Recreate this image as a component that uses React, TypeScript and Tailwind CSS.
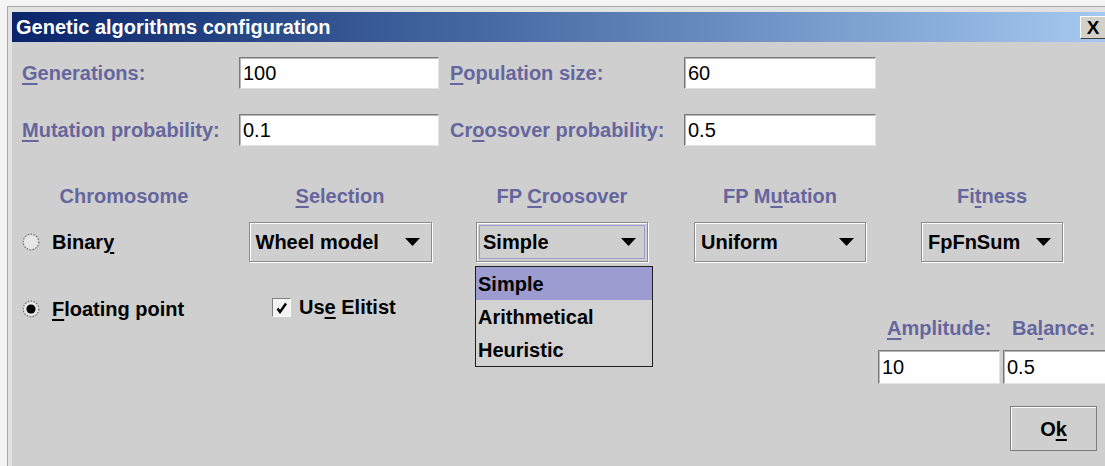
import React from 'react';

// underlined mnemonic letter
const Mn = ({ children }: { children: React.ReactNode }) => (
  <span className="underline decoration-2 underline-offset-[3px]">{children}</span>
);

const Label = ({ children, className = '' }: { children: React.ReactNode; className?: string }) => (
  <div className={`shrink-0 text-[20px] leading-none font-bold text-[#66669e] ${className}`}>{children}</div>
);

const Field = ({ value, className = '' }: { value: string; className?: string }) => (
  <div
    className={`shrink-0 flex items-center bg-white border border-t-[#7a7a7a] border-l-[#7a7a7a] border-b-[#e4e4e4] border-r-[#e4e4e4] shadow-[inset_1px_1px_0_#b8b8b8] pl-[3px] text-[20px] leading-none text-black ${className}`}
  >
    {value}
  </div>
);

const Arrow = () => (
  <svg width="15" height="8" viewBox="0 0 15 8" className="ml-auto mr-[8px] shrink-0">
    <path d="M0 0H15L7.5 8Z" fill="#000" />
  </svg>
);

const Combo = ({ value, focused = false, className = '' }: { value: string; focused?: boolean; className?: string }) => (
  <div
    className={`shrink-0 h-[40px] flex border border-[#8a8a8a] shadow-[inset_1px_1px_0_#fff,1px_1px_0_#fff] ${className}`}
  >
    <div
      className={`m-[2px] flex-1 flex items-center border ${focused ? 'border-[#9c9cd0]' : 'border-transparent'}`}
    >
      <span className="pl-[3px] text-[20px] leading-none font-bold text-black">{value}</span>
      <Arrow />
    </div>
  </div>
);

const Radio = ({ on }: { on: boolean }) => (
  <svg width="18" height="18" viewBox="0 0 18 18" className="shrink-0 block">
    <circle cx="9" cy="9" r="7.8" fill="#e6e6e6" stroke="#6e6e6e" strokeWidth="1.2" strokeDasharray="1.6 1.4" />
    {on && <circle cx="9" cy="9" r="4.6" fill="#000" />}
  </svg>
);

const Check = () => (
  <div className="shrink-0 w-[19px] h-[19px] flex items-center justify-center bg-[#f2f2f2] border border-t-[#808080] border-l-[#808080] border-b-white border-r-white">
    <svg width="13" height="13" viewBox="0 0 13 13">
      <path d="M2.5 7.5L5 11L11 2.5" fill="none" stroke="#000" strokeWidth="2.4" />
    </svg>
  </div>
);

const Item = ({ children }: { children: React.ReactNode }) => (
  <span className="text-[20px] leading-none font-bold text-black">{children}</span>
);

export default function App() {
  return (
    <div className="w-[1105px] h-[466px] overflow-hidden bg-[#f4f4f4] pt-[6px] pl-[7px] font-['Liberation_Sans',Arial,sans-serif]">
      <div className="w-[1120px] h-[470px] border-t border-l border-[#a8a8a8] bg-[#e2e2e2] pt-[5px] pl-[4px]">
        {/* title bar */}
        <div className="w-[1100px] h-[30px] flex items-center pl-[4px] pr-[6px] bg-linear-to-r from-[#0a246a] to-[#a6caf0]">
          <span className="text-[20px] leading-none font-bold text-white">Genetic algorithms configuration</span>
          <div className="ml-auto w-[26px] h-[23px] flex items-center justify-center bg-[#d4d0c8] border border-t-white border-l-white border-b-[#404040] border-r-[#404040]">
            <span className="text-[19px] leading-none font-bold text-black">X</span>
          </div>
        </div>

        {/* body */}
        <div className="w-[1100px] h-[430px] bg-[#cfcfcf] pt-[15px] pl-[10px]">
          <div className="flex items-center h-[32px]">
            <Label className="w-[217px]"><Mn>G</Mn>enerations:</Label>
            <Field value="100" className="w-[200px] h-[32px]" />
            <Label className="ml-[11px] w-[234px]"><Mn>P</Mn>opulation size:</Label>
            <Field value="60" className="w-[192px] h-[32px]" />
          </div>
          <div className="flex items-center h-[32px] mt-[25px]">
            <Label className="w-[217px]"><Mn>M</Mn>utation probability:</Label>
            <Field value="0.1" className="w-[200px] h-[32px]" />
            <Label className="ml-[11px] w-[234px]">Cr<Mn>o</Mn>osover probability:</Label>
            <Field value="0.5" className="w-[192px] h-[32px]" />
          </div>

          {/* column headers */}
          <div className="flex items-center h-[24px] mt-[38px]">
            <Label className="w-[204px] text-center">Chromosome</Label>
            <Label className="ml-[14px] w-[200px] text-center"><Mn>S</Mn>election</Label>
            <Label className="ml-[22px] w-[200px] text-center">FP <Mn>C</Mn>roosover</Label>
            <Label className="ml-[18px] w-[200px] text-center">FP M<Mn>u</Mn>tation</Label>
            <Label className="ml-[12px] w-[200px] text-center">Fi<Mn>t</Mn>ness</Label>
          </div>

          {/* combos */}
          <div className="flex h-[40px] mt-[14px]">
            <div className="w-[204px] shrink-0 flex items-center gap-[12px]">
              <Radio on={false} />
              <Item>Binar<Mn>y</Mn></Item>
            </div>
            <div className="ml-[14px] w-[200px] shrink-0 flex justify-center">
              <Combo value="Wheel model" className="w-[183px]" />
            </div>
            <div className="relative ml-[22px] w-[200px] shrink-0 flex justify-center">
              <Combo value="Simple" focused className="w-[172px]" />
              {/* open popup list */}
              <div className="absolute z-10 top-[44px] left-[13px] w-[178px] border border-[#1e1e1e] bg-[#d2d2d2] flex flex-col">
                <div className="h-[33px] flex items-center pl-[2px] bg-[#9c9cd0]"><Item>Simple</Item></div>
                <div className="h-[33px] flex items-center pl-[2px]"><Item>Arithmetical</Item></div>
                <div className="h-[33px] flex items-center pl-[2px]"><Item>Heuristic</Item></div>
              </div>
            </div>
            <div className="ml-[18px] w-[200px] shrink-0 flex justify-center">
              <Combo value="Uniform" className="w-[172px]" />
            </div>
            <div className="ml-[12px] w-[200px] shrink-0 flex justify-center">
              <Combo value="FpFnSum" className="w-[142px]" />
            </div>
          </div>

          {/* bottom area */}
          <div className="flex items-start">
            <div className="w-[204px] shrink-0 pt-[37px]">
              <div className="h-[20px] flex items-center gap-[12px]">
                <Radio on />
                <Item><Mn>F</Mn>loating point</Item>
              </div>
            </div>
            <div className="ml-[14px] w-[200px] shrink-0 pt-[35px] pl-[32px]">
              <div className="h-[20px] flex items-center gap-[8px]">
                <Check />
                <Item>Us<Mn>e</Mn> Elitist</Item>
              </div>
            </div>
            <div className="ml-[438px] shrink-0 pt-[56px] flex flex-col">
              <div className="flex h-[20px] items-center">
                <Label className="w-[125px] pl-[9px]"><Mn>A</Mn>mplitude:</Label>
                <Label className="w-[110px] pl-[9px]">Ba<Mn>l</Mn>ance:</Label>
              </div>
              <div className="flex gap-[3px] mt-[12px]">
                <Field value="10" className="w-[122px] h-[34px]" />
                <Field value="0.5" className="w-[110px] h-[34px]" />
              </div>
              <div className="mt-[22px] ml-[132px] w-[87px] h-[45px] flex items-center justify-center border border-[#7d7d7d] shadow-[inset_1px_1px_0_#fff]">
                <Item>O<Mn>k</Mn></Item>
              </div>
            </div>
          </div>
        </div>
      </div>
    </div>
  );
}
